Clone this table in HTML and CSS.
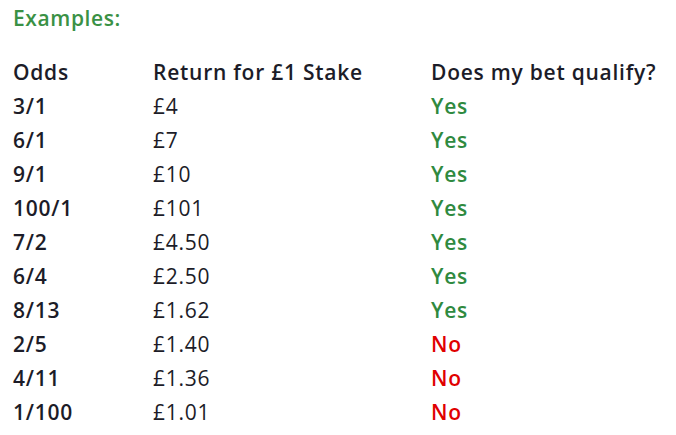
FILE: index.html
```html
<!DOCTYPE html>
<html>
<head>
<meta charset="utf-8">
<link rel="stylesheet" href="styles.css">
</head>
<body>
<h2 class="title">Examples:</h2>
<table class="odds">
  <thead>
    <tr><th class="c1">Odds</th><th class="c2">Return for £1 Stake</th><th class="c3">Does my bet qualify?</th></tr>
  </thead>
  <tbody>
    <tr><td class="o">3/1</td><td>£4</td><td class="yes">Yes</td></tr>
    <tr><td class="o">6/1</td><td>£7</td><td class="yes">Yes</td></tr>
    <tr><td class="o">9/1</td><td>£10</td><td class="yes">Yes</td></tr>
    <tr><td class="o">100/1</td><td>£101</td><td class="yes">Yes</td></tr>
    <tr><td class="o">7/2</td><td>£4.50</td><td class="yes">Yes</td></tr>
    <tr><td class="o">6/4</td><td>£2.50</td><td class="yes">Yes</td></tr>
    <tr><td class="o">8/13</td><td>£1.62</td><td class="yes">Yes</td></tr>
    <tr><td class="o">2/5</td><td>£1.40</td><td class="no">No</td></tr>
    <tr><td class="o">4/11</td><td>£1.36</td><td class="no">No</td></tr>
    <tr><td class="o">1/100</td><td>£1.01</td><td class="no">No</td></tr>
  </tbody>
</table>
</body>
</html>
```
FILE: styles.css
```css
html, body { margin: 0; padding: 0; background: #fff; }
body {
  font-family: "Open Sans", "DejaVu Sans", sans-serif;
  color: #1c1c28;
  padding: 4px 13px 0 13px;
}
.title {
  margin: 0;
  font-size: 21px;
  font-weight: 600;
  letter-spacing: 0.6px;
  color: #3a9145;
  line-height: 28px;
}
.odds {
  border-collapse: collapse;
  margin-top: 23px;
  font-size: 21px;
  letter-spacing: 0.75px;
}
.odds th, .odds td {
  padding: 0;
  height: 34px;
  line-height: 34px;
  text-align: left;
  vertical-align: middle;
}
.odds th { font-weight: 600; }
.c1 { width: 140px; }
.c2 { width: 278px; }
.o { font-weight: 600; }
.yes { color: #2f8a3f; font-weight: 600; }
.no { color: #e00000; font-weight: 600; }
```
